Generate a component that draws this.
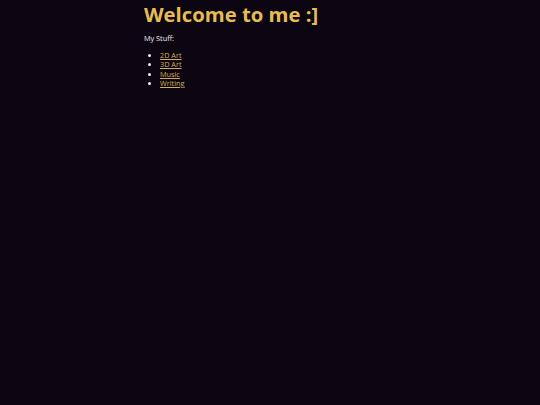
import React from 'react';

const links = ['2D Art', '3D Art', 'Music', 'Writing'];

export default function App() {
  return (
    <div className="min-h-screen bg-[#0b0612] text-[#f2eef5]" style={{ fontFamily: '"Open Sans", "Noto Sans", sans-serif' }}>
      <div className="w-[252px] mx-auto">
        <h1 className="text-[20.3px] leading-[28px] font-bold text-[#e6bc55]">Welcome to me :]</h1>
        <p className="mt-[5px] text-[7.3px] leading-[11px]">My Stuff:</p>
        <ul className="mt-[7px] list-disc pl-[16px] text-[7.3px] leading-[9.35px]">
          {links.map((l) => (
            <li key={l}>
              <a href="#" className="underline text-[#d2ae58]">{l}</a>
            </li>
          ))}
        </ul>
      </div>
    </div>
  );
}
